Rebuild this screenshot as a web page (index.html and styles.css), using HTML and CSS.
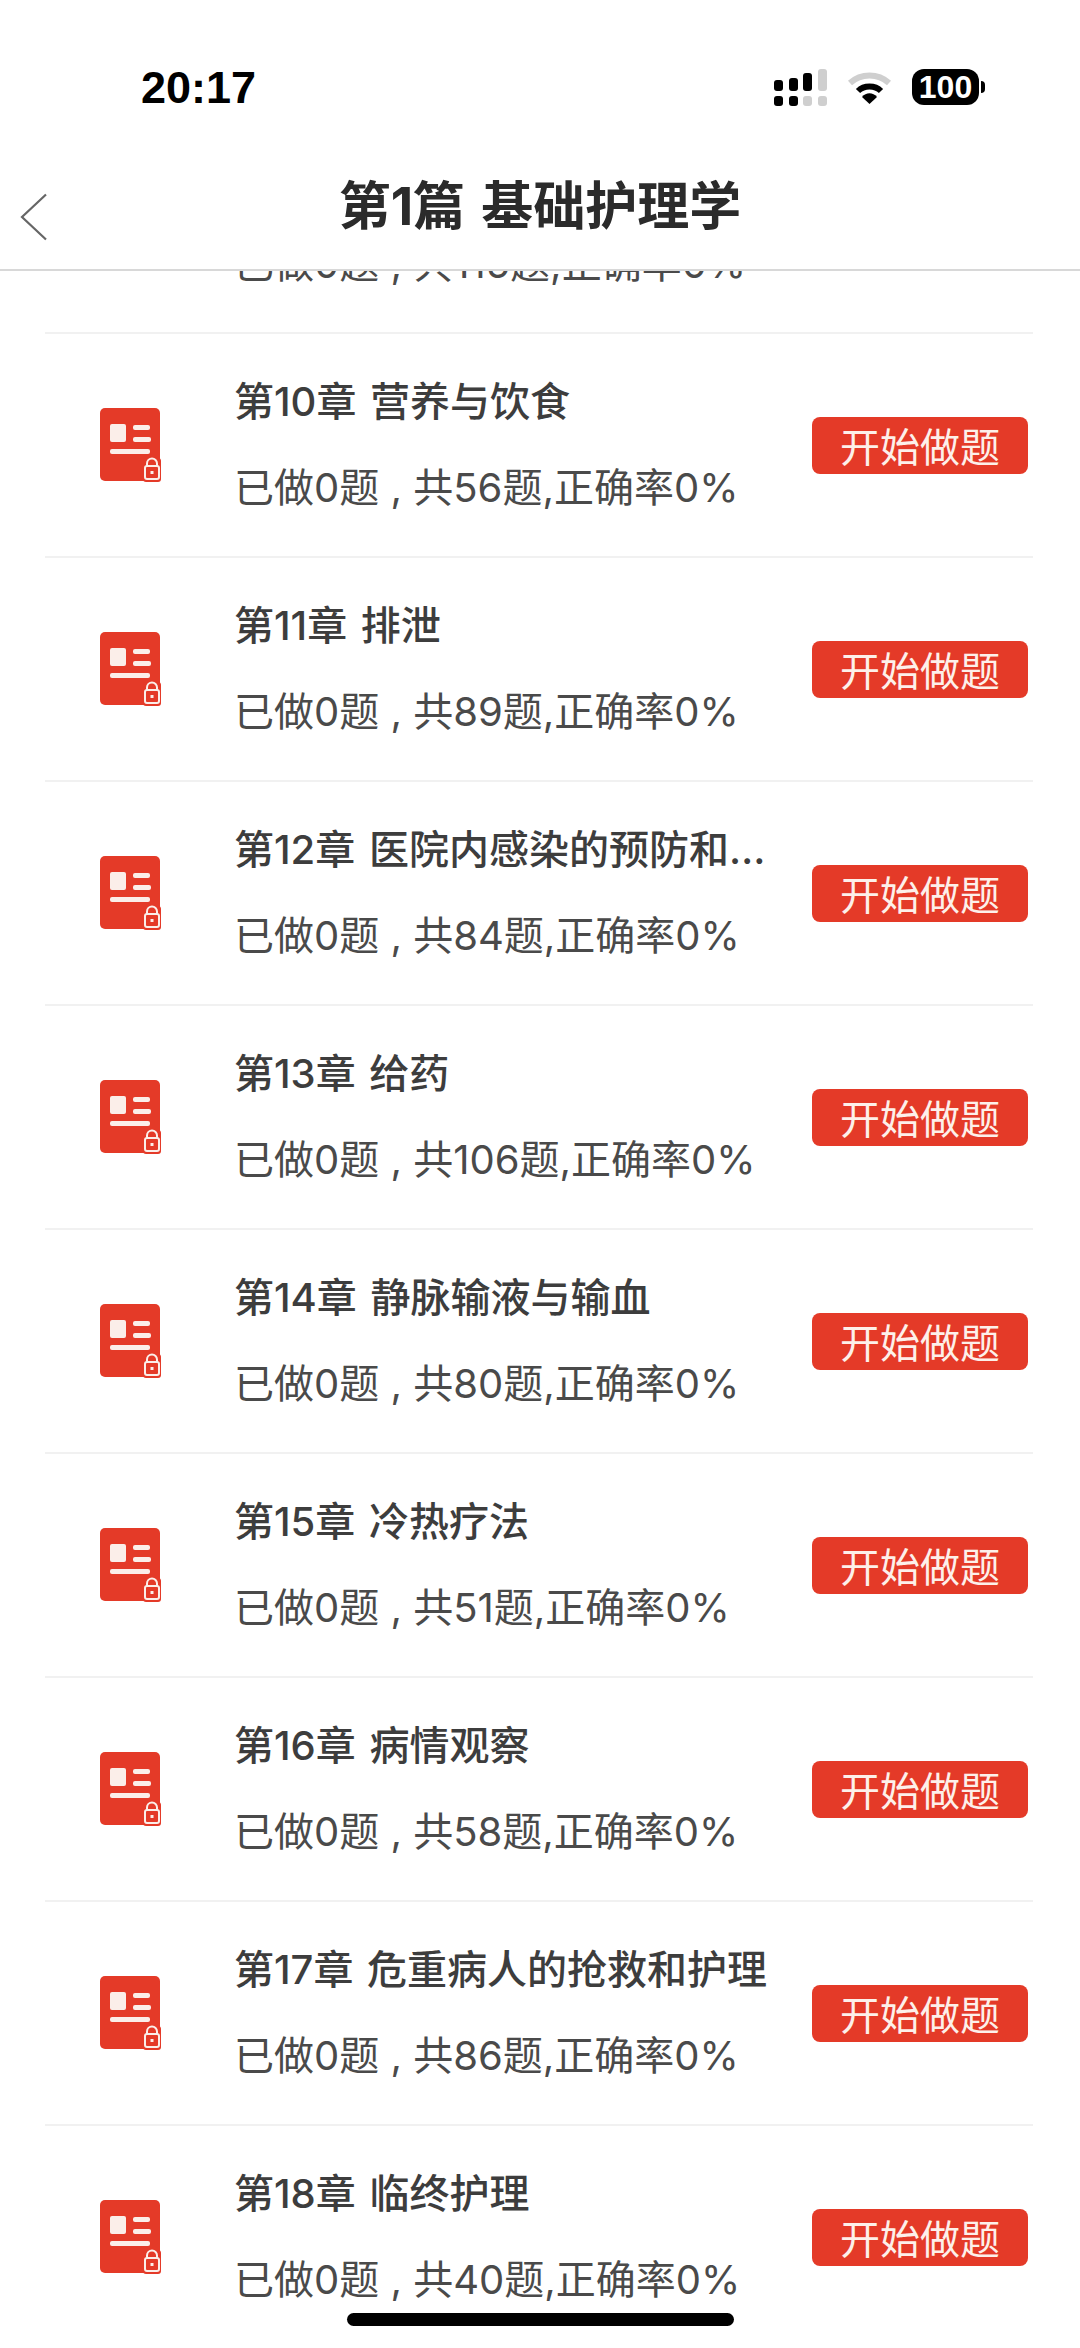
FILE: index.html
```html
<!DOCTYPE html>
<html lang="zh-CN">
<head>
<meta charset="utf-8">
<title>第1篇 基础护理学</title>
<link rel="stylesheet" href="styles.css">
</head>
<body>
<svg class="defs" width="0" height="0" aria-hidden="true">
  <symbol id="doc" viewBox="0 0 61 74">
    <rect x="0" y="0" width="60" height="73" rx="5" fill="#e43a28"/>
    <rect x="10" y="16" width="16" height="18" rx="2" fill="#fbeee9"/>
    <rect x="33" y="17" width="17" height="5" rx="2" fill="#fbeee9"/>
    <rect x="33" y="29" width="18" height="5" rx="2" fill="#fbeee9"/>
    <rect x="10" y="41" width="40" height="5" rx="2" fill="#fbeee9"/>
    <rect x="43" y="50" width="18" height="24" rx="3" fill="#e43a28"/>
    <path d="M47 58v-2.500a5 5 0 0 1 10 0V58" fill="none" stroke="#fbeee9" stroke-width="2"/>
    <rect x="45" y="58" width="14" height="13" rx="2" fill="none" stroke="#fbeee9" stroke-width="2"/>
    <rect x="50.500" y="63" width="3" height="3" fill="#fbeee9"/>
  </symbol>
</svg>

<header class="top">
  <div class="status">
    <span class="time">20:17</span>
    <div class="status-icons">
      <svg class="signal" width="53" height="37" viewBox="0 0 53 37">
        <rect x="0" y="11" width="9" height="11" rx="3" fill="#000"/>
        <rect x="0" y="27" width="9" height="10" rx="3" fill="#000"/>
        <rect x="15" y="9" width="9" height="13" rx="3" fill="#000"/>
        <rect x="15" y="27" width="9" height="10" rx="3" fill="#000"/>
        <rect x="29" y="4" width="9" height="18" rx="3" fill="#000"/>
        <rect x="29" y="27" width="9" height="10" rx="3" fill="#cfcfcf"/>
        <rect x="44" y="0" width="9" height="22" rx="3" fill="#cfcfcf"/>
        <rect x="44" y="27" width="9" height="10" rx="3" fill="#cfcfcf"/>
      </svg>
      <svg class="wifi" width="45" height="33" viewBox="0 0 45 33">
        <path d="M3 12C14 2 31 2 42 12" fill="none" stroke="#cfcfcf" stroke-width="6"/>
        <path d="M11 20C17 14 28 14 34 20" fill="none" stroke="#000" stroke-width="6"/>
        <path d="M15 26C19 21 26 21 30 26L22.500 33Z" fill="#000"/>
      </svg>
      <div class="battery"><span class="battery-level">100</span><i class="battery-nub"></i></div>
    </div>
  </div>
  <div class="nav">
    <svg class="back" width="28" height="48" viewBox="0 0 28 48">
      <path d="M26 1.500L2 24l24 22.500" fill="none" stroke="#666" stroke-width="2.200"/>
    </svg>
    <h1 class="nav-title">第1篇 基础护理学</h1>
  </div>
</header>

<main class="viewport">
  <ul class="list">
    <li class="row"><svg class="doc-icon"><use href="#doc"/></svg><div class="info"><div class="name"></div><div class="stats">已做0题 , 共115题,正确率0%</div></div><button class="start">开始做题</button></li>
    <li class="row"><svg class="doc-icon"><use href="#doc"/></svg><div class="info"><div class="name">第10章 营养与饮食</div><div class="stats">已做0题 , 共56题,正确率0%</div></div><button class="start">开始做题</button></li>
    <li class="row"><svg class="doc-icon"><use href="#doc"/></svg><div class="info"><div class="name">第11章 排泄</div><div class="stats">已做0题 , 共89题,正确率0%</div></div><button class="start">开始做题</button></li>
    <li class="row"><svg class="doc-icon"><use href="#doc"/></svg><div class="info"><div class="name">第12章 医院内感染的预防和控制</div><div class="stats">已做0题 , 共84题,正确率0%</div></div><button class="start">开始做题</button></li>
    <li class="row"><svg class="doc-icon"><use href="#doc"/></svg><div class="info"><div class="name">第13章 给药</div><div class="stats">已做0题 , 共106题,正确率0%</div></div><button class="start">开始做题</button></li>
    <li class="row"><svg class="doc-icon"><use href="#doc"/></svg><div class="info"><div class="name">第14章 静脉输液与输血</div><div class="stats">已做0题 , 共80题,正确率0%</div></div><button class="start">开始做题</button></li>
    <li class="row"><svg class="doc-icon"><use href="#doc"/></svg><div class="info"><div class="name">第15章 冷热疗法</div><div class="stats">已做0题 , 共51题,正确率0%</div></div><button class="start">开始做题</button></li>
    <li class="row"><svg class="doc-icon"><use href="#doc"/></svg><div class="info"><div class="name">第16章 病情观察</div><div class="stats">已做0题 , 共58题,正确率0%</div></div><button class="start">开始做题</button></li>
    <li class="row"><svg class="doc-icon"><use href="#doc"/></svg><div class="info"><div class="name">第17章 危重病人的抢救和护理</div><div class="stats">已做0题 , 共86题,正确率0%</div></div><button class="start">开始做题</button></li>
    <li class="row"><svg class="doc-icon"><use href="#doc"/></svg><div class="info"><div class="name">第18章 临终护理</div><div class="stats">已做0题 , 共40题,正确率0%</div></div><button class="start">开始做题</button></li>
  </ul>
</main>
<div class="home-bar"></div>
</body>
</html>
```

FILE: styles.css
```css
* { box-sizing: border-box; }
html, body { margin: 0; height: 2348px; overflow: hidden; background: #fff; }
body { font-family: "Inter", "Noto Sans CJK SC", sans-serif; position: relative; }
.defs { position: absolute; }

.top { height: 271px; background: #fff; border-bottom: 2px solid #d8d8d8; position: relative; z-index: 1; }
.status { height: 106px; padding: 69px 95px 0 141px; display: flex; justify-content: space-between; align-items: flex-start; }
.time { font: 700 45px/37px "Liberation Sans", sans-serif; color: #000; }
.status-icons { display: flex; align-items: flex-start; }
.signal { display: block; }
.wifi { display: block; margin: 2px 20px 0 20px; }
.battery { width: 73px; height: 36px; position: relative; }
.battery-level { display: block; width: 67px; height: 36px; border-radius: 12px; background: #000; color: #fff; font: 700 32px/36px "Liberation Sans", sans-serif; text-align: center; }
.battery-nub { position: absolute; right: 0; top: 12px; width: 4px; height: 12px; background: #000; border-radius: 0 6px 6px 0; }

.nav { height: 163px; position: relative; display: flex; justify-content: center; padding-top: 74px; }
.nav-title { margin: 0; font-size: 52px; line-height: 54px; font-weight: 700; color: #2b2b2b; word-spacing: 4px; }
.back { position: absolute; left: 20px; top: 87px; }

.viewport { height: 2077px; overflow: hidden; }
.list { list-style: none; margin: -161px 0 0; padding: 0 47px 0 45px; }
.row { height: 224px; display: flex; align-items: center; border-bottom: 2px solid #f1f1f1; }
.doc-icon { width: 61px; height: 74px; margin-left: 55px; flex: none; }
.info { width: 537px; margin-left: 73px; flex: none; }
.name { height: 48px; font-size: 40px; line-height: 48px; font-weight: 500; color: #3d3d3d; white-space: nowrap; overflow: hidden; text-overflow: ellipsis; margin-bottom: 38px; word-spacing: 3px; }
.stats { font-size: 40px; line-height: 48px; color: #4a4a4a; white-space: nowrap; }
.start { margin-left: 41px; width: 216px; height: 57px; border: 0; border-radius: 8px; background: #e43a28; color: #fdf0ea; font: 400 40px/57px "Noto Sans CJK SC", sans-serif; padding: 0; flex: none; }

.home-bar { position: absolute; left: 347px; top: 2313px; width: 387px; height: 13px; background: #000; border-radius: 7px; z-index: 2; }
```
